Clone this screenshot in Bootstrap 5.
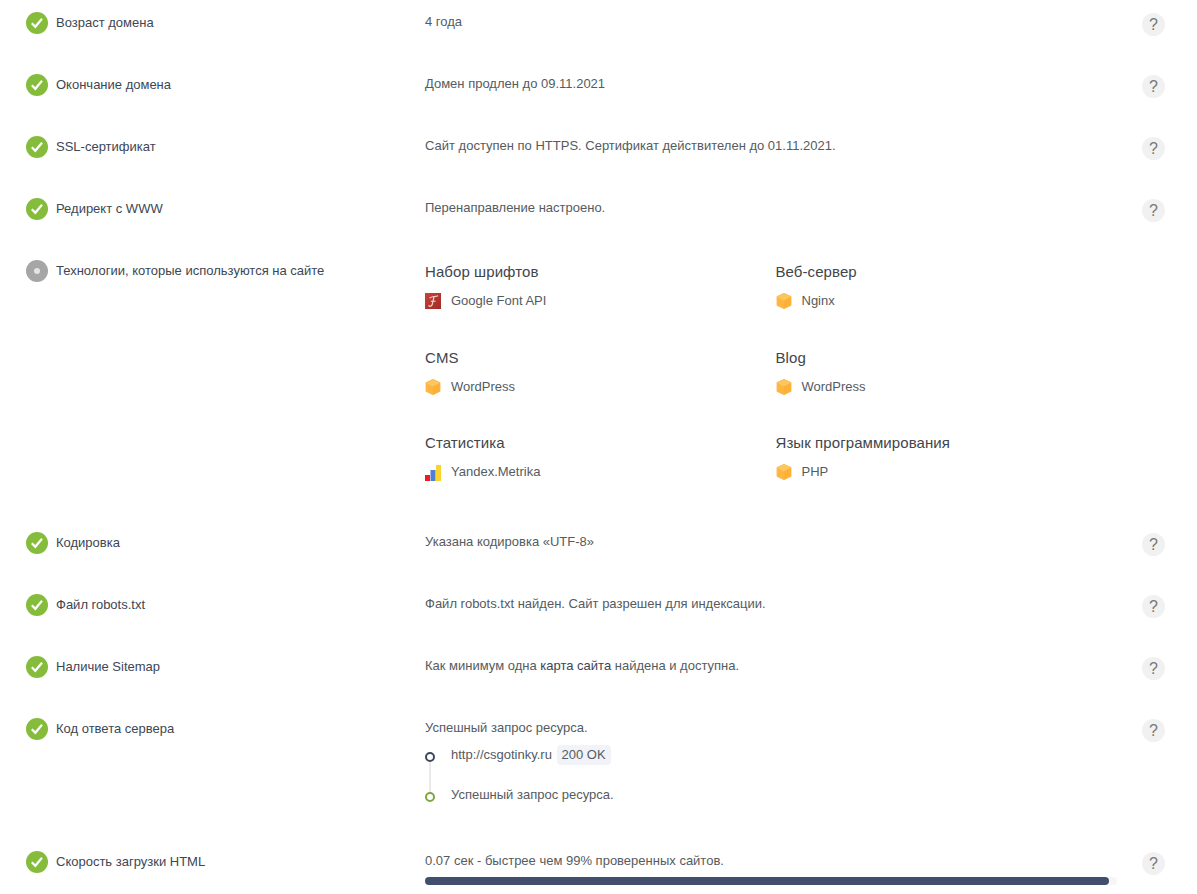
<!DOCTYPE html>
<html lang="ru">
<head>
<meta charset="utf-8">
<title>Аудит сайта</title>
<link href="https://cdn.jsdelivr.net/npm/bootstrap@5.3.0/dist/css/bootstrap.min.css" rel="stylesheet">
<style>
html,body{height:894px;overflow:hidden;background:#fff}
body{font-family:"Liberation Sans",Arial,sans-serif;font-size:13px;line-height:20px;color:#555b60}
.audit{padding:12px 32px 0 26px}
.audit-row{margin-bottom:38px}
.st-icon{width:22px;height:22px;flex:none;border-radius:50%;margin-right:8px}
.st-ok{background:#86bc3c}
.st-info{background:#a6a6a6;position:relative}
.st-info i{width:6px;height:6px;border-radius:50%;background:#e4e4e4}
.lbl{width:369px;flex:none;color:#3d4654;line-height:20px;margin-top:1px}
.val{flex:1 1 auto;min-width:0;line-height:20px}
.help-dot{width:23px;height:23px;flex:none;border-radius:50%;background:#f1f1f1;color:#777;font-size:16px;line-height:23px;text-align:center;margin-top:1px}
.tech-grid{display:grid;grid-template-columns:350.500px 1fr;row-gap:36.5px;margin-top:2px;padding-bottom:12px}
.tech-h{font-size:15px;line-height:20px;color:#41464c;margin-bottom:9px;letter-spacing:.08px}
.tech-i{margin-right:10px;flex:none;width:16px;height:18px}
.map-link{color:#3d4654}
.tl{margin-top:7px;padding-bottom:8px}
.tl-item{position:relative;padding-left:26px}
.tl-gap{height:40px}
.tl-dot{position:absolute;left:0;top:7px;width:10px;height:10px;border-radius:50%;border:2px solid #3c4760;background:#fff}
.tl-dot.grn{border-color:#7ea73e}
.tl-line{position:absolute;left:4px;top:17px;width:2px;height:32px;background:#eaeaea}
.code-tag{display:inline-block;background:#f2f3f8;border-radius:4px;padding:0 5px;margin-left:1px;font-size:13px;line-height:20px;color:#555b60}
.bar-track{height:8px;width:692px;background:#f6f6f6;border-radius:4px;margin-top:6px}
.bar-fill{height:8px;background:#414e6d;border-radius:4px}
</style>
</head>
<body>
<svg width="0" height="0" class="position-absolute">
<symbol id="cube" viewBox="0 0 16 18"><path d="M8 1.500 14.800 4.900V13.100L8 16.500 1.200 13.100V4.900Z" fill="#fdb63f" stroke="#fdb63f" stroke-width="1.200" stroke-linejoin="round"/><path d="M8 1.500 14.800 4.900 8 8.500 1.200 4.900Z" fill="#fcc75c"/><path d="M8 8.500 14.800 4.900V13.100L8 16.500Z" fill="#fdb038"/></symbol>
<symbol id="tick" viewBox="0 0 14 14"><path d="M1.800 7.200 5.300 10.800 12 2.800" fill="none" stroke="#fff" stroke-width="2.200"/></symbol>
</svg>
<div class="audit">

<div class="audit-row d-flex">
<div class="st-icon st-ok d-flex align-items-center justify-content-center"><svg width="14" height="14"><use href="#tick"/></svg></div>
<div class="lbl">Возраст домена</div><div class="val">4 года</div><div class="help-dot">?</div>
</div>

<div class="audit-row d-flex">
<div class="st-icon st-ok d-flex align-items-center justify-content-center"><svg width="14" height="14"><use href="#tick"/></svg></div>
<div class="lbl">Окончание домена</div><div class="val">Домен продлен до 09.11.2021</div><div class="help-dot">?</div>
</div>

<div class="audit-row d-flex">
<div class="st-icon st-ok d-flex align-items-center justify-content-center"><svg width="14" height="14"><use href="#tick"/></svg></div>
<div class="lbl">SSL-сертификат</div><div class="val">Сайт доступен по HTTPS. Сертификат действителен до 01.11.2021.</div><div class="help-dot">?</div>
</div>

<div class="audit-row d-flex">
<div class="st-icon st-ok d-flex align-items-center justify-content-center"><svg width="14" height="14"><use href="#tick"/></svg></div>
<div class="lbl">Редирект с WWW</div><div class="val">Перенаправление настроено.</div><div class="help-dot">?</div>
</div>

<div class="audit-row d-flex">
<div class="st-icon st-info d-flex align-items-center justify-content-center"><i></i></div>
<div class="lbl">Технологии, которые используются на сайте</div>
<div class="val">
<div class="tech-grid">
<div><div class="tech-h">Набор шрифтов</div><div class="d-flex align-items-center"><svg class="tech-i" viewBox="0 0 16 18"><defs><linearGradient id="fg" x1="0" y1="0" x2="1" y2="1"><stop offset="0" stop-color="#c8423a"/><stop offset="1" stop-color="#a02a26"/></linearGradient></defs><rect y="1" width="16" height="16" fill="url(#fg)"/><path d="M4.500 6.200C6.500 4 10 5 13 3.800M9 4.800 7.200 12.500C6.800 14.200 5 14.800 3.500 13.500M5.800 9.200H10.500" fill="none" stroke="#f6dcd6" stroke-width="1.100"/></svg><span>Google Font API</span></div></div>
<div><div class="tech-h">Веб-сервер</div><div class="d-flex align-items-center"><svg class="tech-i"><use href="#cube"/></svg><span>Nginx</span></div></div>
<div><div class="tech-h">CMS</div><div class="d-flex align-items-center"><svg class="tech-i"><use href="#cube"/></svg><span>WordPress</span></div></div>
<div><div class="tech-h">Blog</div><div class="d-flex align-items-center"><svg class="tech-i"><use href="#cube"/></svg><span>WordPress</span></div></div>
<div><div class="tech-h">Статистика</div><div class="d-flex align-items-center"><svg class="tech-i" viewBox="0 0 16 18"><rect y="12" width="5" height="6" fill="#ee1c25"/><rect x="5.500" y="7" width="5" height="11" fill="#4f7fd0"/><rect x="11" y="2" width="5" height="16" fill="#fcd22e"/></svg><span>Yandex.Metrika</span></div></div>
<div><div class="tech-h">Язык программирования</div><div class="d-flex align-items-center"><svg class="tech-i"><use href="#cube"/></svg><span>PHP</span></div></div>
</div>
</div>
<div class="help-dot invisible">?</div>
</div>

<div class="audit-row d-flex">
<div class="st-icon st-ok d-flex align-items-center justify-content-center"><svg width="14" height="14"><use href="#tick"/></svg></div>
<div class="lbl">Кодировка</div><div class="val">Указана кодировка «UTF-8»</div><div class="help-dot">?</div>
</div>

<div class="audit-row d-flex">
<div class="st-icon st-ok d-flex align-items-center justify-content-center"><svg width="14" height="14"><use href="#tick"/></svg></div>
<div class="lbl">Файл robots.txt</div><div class="val">Файл robots.txt найден. Сайт разрешен для индексации.</div><div class="help-dot">?</div>
</div>

<div class="audit-row d-flex">
<div class="st-icon st-ok d-flex align-items-center justify-content-center"><svg width="14" height="14"><use href="#tick"/></svg></div>
<div class="lbl">Наличие Sitemap</div><div class="val">Как минимум одна <span class="map-link">карта сайта</span> найдена и доступна.</div><div class="help-dot">?</div>
</div>

<div class="audit-row d-flex">
<div class="st-icon st-ok d-flex align-items-center justify-content-center"><svg width="14" height="14"><use href="#tick"/></svg></div>
<div class="lbl">Код ответа сервера</div>
<div class="val">Успешный запрос ресурса.
<div class="tl">
<div class="tl-item tl-gap"><span class="tl-dot"></span><span class="tl-line"></span>http://csgotinky.ru <span class="code-tag">200 OK</span></div>
<div class="tl-item"><span class="tl-dot grn"></span>Успешный запрос ресурса.</div>
</div>
</div>
<div class="help-dot">?</div>
</div>

<div class="audit-row d-flex">
<div class="st-icon st-ok d-flex align-items-center justify-content-center"><svg width="14" height="14"><use href="#tick"/></svg></div>
<div class="lbl">Скорость загрузки HTML</div>
<div class="val">0.07 сек - быстрее чем 99% проверенных сайтов.
<div class="bar-track"><div class="bar-fill" style="width:98.9%"></div></div>
</div>
<div class="help-dot">?</div>
</div>

</div>
<script src="https://cdn.jsdelivr.net/npm/bootstrap@5.3.0/dist/js/bootstrap.bundle.min.js"></script>
</body>
</html>
